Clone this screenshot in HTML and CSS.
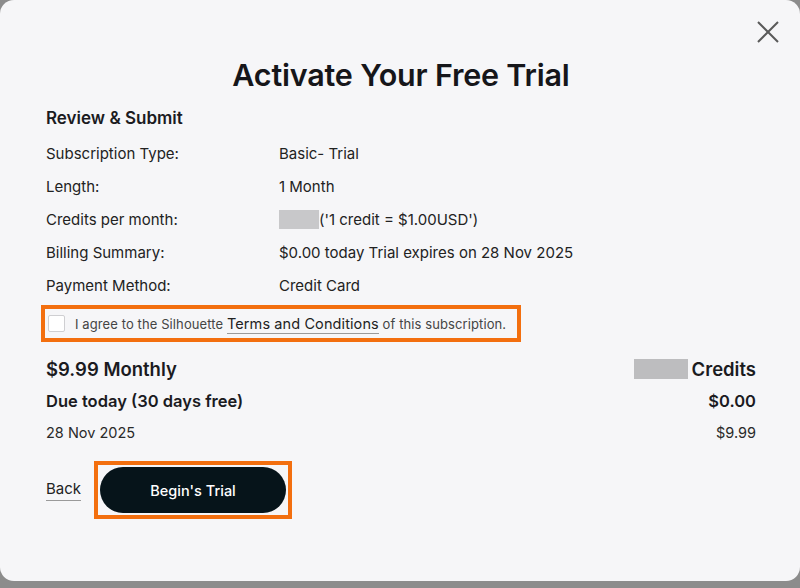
FILE: index.html
```html
<!DOCTYPE html>
<html>
<head>
<meta charset="utf-8">
<link rel="stylesheet" href="styles.css">
</head>
<body>
<div class="modal">
  <button class="close" aria-label="Close">
    <svg width="22" height="22" viewBox="0 0 22 22"><path d="M1 1 L21 21 M21 1 L1 21" stroke="#5a5a5a" stroke-width="2" fill="none"/></svg>
  </button>
  <h1 class="title">Activate Your Free Trial</h1>
  <h2 class="section">Review &amp; Submit</h2>
  <div class="rows">
    <div class="row"><span class="label">Subscription Type:</span><span class="value">Basic- Trial</span></div>
    <div class="row"><span class="label">Length:</span><span class="value">1 Month</span></div>
    <div class="row"><span class="label">Credits per month:</span><span class="value"><span class="blur"></span>('1 credit = $1.00USD')</span></div>
    <div class="row"><span class="label">Billing Summary:</span><span class="value">$0.00 today Trial expires on 28 Nov 2025</span></div>
    <div class="row"><span class="label">Payment Method:</span><span class="value">Credit Card</span></div>
  </div>
  <div class="agree hl">
    <span class="box"></span>
    <span class="agree-text">I agree to the Silhouette <span class="terms">Terms and Conditions</span> of this subscription.</span>
  </div>
  <div class="summary">
    <div class="srow big"><span>$9.99 Monthly</span><span class="credits"><span class="blur blur-lg"></span>Credits</span></div>
    <div class="srow mid"><span>Due today (30 days free)</span><span>$0.00</span></div>
    <div class="srow small"><span>28 Nov 2025</span><span>$9.99</span></div>
  </div>
  <div class="actions">
    <a class="back">Back</a>
    <div class="hl btn-wrap"><button class="btn">Begin's Trial</button></div>
  </div>
</div>
</body>
</html>
```
FILE: styles.css
```css
html, body { margin: 0; padding: 0; }
body {
  width: 800px; height: 588px;
  background: #8c8c8c;
  font-family: Inter, "Noto Sans", sans-serif;
  color: #1b1b1f;
  overflow: hidden;
}
.modal {
  position: relative;
  box-sizing: border-box;
  width: 800px; height: 581px;
  background: #f6f6f8;
  border-radius: 14px;
  padding: 55px 44px 0 46px;
}
.close {
  position: absolute; top: 21px; right: 21px;
  border: 0; background: none; padding: 0; width: 22px; height: 22px;
}
.close svg { display: block; }
.title {
  margin: 0;
  text-align: center;
  font-size: 30.5px; font-weight: 600;
  letter-spacing: -0.2px;
  line-height: 40px;
  color: #16161a;
}
.section {
  margin: 11px 0 0;
  font-size: 17px; font-weight: 600; line-height: 24px;
}
.rows { margin-top: 7px; display: flex; flex-direction: column; }
.row { display: flex; height: 33px; align-items: center; font-size: 15px; color: #222; }
.label { width: 233px; }
.value { display: flex; align-items: center; }
.blur { display: inline-block; width: 40px; height: 19px; background: #c8c8ca; }
.blur-lg { width: 54px; height: 20px; background: #bdbdbf; margin-right: 4px; }
.hl { border: 4px solid #f36f0f; box-sizing: border-box; }
.agree {
  margin: 3px 0 0 -5px;
  width: 480px; height: 37px;
  display: flex; align-items: center;
  padding-left: 3px;
}
.box {
  width: 15px; height: 15px;
  border: 1px solid #cfcfd2; border-radius: 2px; background: #fff;
  margin-right: 10px;
}
.agree-text { font-size: 13px; color: #444; letter-spacing: 0.1px; }
.terms {
  font-size: 14.5px; color: #222;
  border-bottom: 1px solid #9a9a9a;
  padding-bottom: 1px;
}
.summary { margin-top: 11px; }
.srow { display: flex; justify-content: space-between; align-items: center; }
.big { font-size: 18.5px; font-weight: 600; height: 32px; }
.credits { display: flex; align-items: center; }
.mid { font-size: 16.5px; font-weight: 600; height: 32px; }
.small { font-size: 14.5px; height: 30px; color: #2a2a2a; }
.actions { display: flex; align-items: center; margin-top: 14px; }
.back {
  font-size: 15px; color: #222;
  border-bottom: 1.5px solid #9a9a9a;
  padding-bottom: 2px;
  margin-right: 13px;
}
.btn-wrap { padding: 2px; width: 198px; height: 58px; display: flex; }
.btn {
  flex: 1;
  border: 0; border-radius: 24px;
  background: #06141a; color: #fff;
  font-family: Inter, sans-serif;
  font-size: 14.5px; font-weight: 500;
}
```
